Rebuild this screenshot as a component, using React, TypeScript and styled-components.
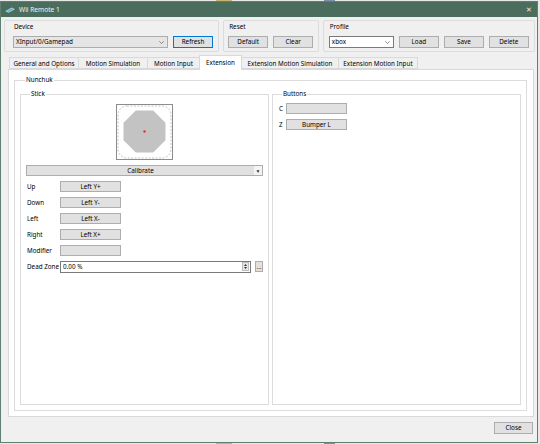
import styled, { createGlobalStyle } from "styled-components";

const GlobalStyle = createGlobalStyle`
  html, body {
    margin: 0;
    padding: 0;
  }
  body {
    width: 540px;
    height: 444px;
    overflow: hidden;
    background: #5b7a6d;
    font-family: "Noto Sans", "Liberation Sans", sans-serif;
    font-size: 6.3px;
    color: #000;
  }
  * {
    box-sizing: border-box;
  }
`;

const Desktop = styled.div`
  padding-top: 1px;
  background: linear-gradient(90deg, #e8e8e8 0 40%, #c9b36a 40% 43%, #e8e8e8 43% 60%, #7d8fa8 60% 62%, #e8e8e8 62%);
  height: 444px;
`;

const Window = styled.div`
  width: 538px;
  height: 442px;
  border: 1px solid #5f7f71;
  background: #f0f0f0;
  display: flex;
  flex-direction: column;
`;

const TitleBar = styled.div`
  height: 15px;
  background: #4b6d5e;
  color: #f2f5f3;
  display: flex;
  align-items: center;
  padding: 0 4px 0 4px;
  gap: 4px;
  font-size: 6.6px;
`;

const TitleText = styled.span`
  flex: 1;
`;

const CloseGlyph = styled.span`
  font-size: 7px;
  color: #e8eeea;
  margin-right: 1px;
`;

const TopRow = styled.div`
  display: flex;
  gap: 4px;
  margin-top: 3px;
  padding: 0 2px 0 3px;
`;

const Group = styled.div<{ $w: number; $pad: number }>`
  width: ${(p) => p.$w}px;
  height: 32px;
  border: 1px solid #dcdcdc;
  border-radius: 2px;
  padding: 1px 0 0 ${(p) => p.$pad}px;
`;

const GroupTitle = styled.div`
  line-height: 9px;
  padding-left: 1px;
`;

const Controls = styled.div`
  display: flex;
  gap: 5px;
  margin-top: 5px;
`;

const Button = styled.div<{ $w: number; $focus?: boolean }>`
  width: ${(p) => p.$w}px;
  height: 12px;
  flex: none;
  border: 1px solid ${(p) => (p.$focus ? "#0078d7" : "#adadad")};
  background: #e1e1e1;
  display: flex;
  align-items: center;
  justify-content: center;
  line-height: 10px;
`;

const Combo = styled.div<{ $w: number; $editable?: boolean }>`
  width: ${(p) => p.$w}px;
  height: 12px;
  flex: none;
  border: 1px solid ${(p) => (p.$editable ? "#7a7a7a" : "#acacac")};
  background: ${(p) => (p.$editable ? "#fff" : "#e5e5e5")};
  display: flex;
  align-items: center;
  padding: 0 3px 0 2px;
  line-height: 10px;
`;

const ComboText = styled.span`
  flex: 1;
`;

const Chevron = () => (
  <svg width="5" height="3" viewBox="0 0 5 3">
    <path d="M0.3 0.3 L2.5 2.5 L4.7 0.3" fill="none" stroke="#606060" strokeWidth="0.7" />
  </svg>
);

const TabBar = styled.div`
  display: flex;
  align-items: flex-end;
  height: 14px;
  margin: 3px 0 0 9px;
`;

const Tab = styled.div<{ $w: number; $active?: boolean }>`
  width: ${(p) => p.$w}px;
  height: ${(p) => (p.$active ? 15 : 12)}px;
  margin-left: -1px;
  margin-bottom: ${(p) => (p.$active ? -1 : 0)}px;
  border: 1px solid #d9d9d9;
  border-bottom: ${(p) => (p.$active ? "none" : "1px solid #d9d9d9")};
  background: ${(p) => (p.$active ? "#fff" : "#f0f0f0")};
  position: relative;
  z-index: ${(p) => (p.$active ? 1 : 0)};
  display: flex;
  align-items: center;
  justify-content: center;
  padding-bottom: ${(p) => (p.$active ? 2 : 0)}px;
  white-space: nowrap;
`;

const TabPage = styled.div`
  flex: 1;
  margin: 0 3px 0 7px;
  border: 1px solid #d9d9d9;
  background: #fff;
  padding: 6px 6px 5px 5px;
  display: flex;
`;

const GroupBox = styled.fieldset`
  margin: 0;
  min-width: 0;
  flex: 1;
  border: 1px solid #dcdcdc;
  padding: 0 5px 5px 5px;
  display: flex;
  flex-direction: column;
`;

const Legend = styled.legend<{ $indent: number }>`
  margin-left: ${(p) => p.$indent}px;
  padding: 0 1px;
  line-height: 8px;
`;

const Columns = styled.div`
  flex: 1;
  display: flex;
  gap: 3px;
  margin-top: 6px;
`;

const StickBox = styled.div`
  align-self: center;
  margin-top: 6px;
  width: 57px;
  height: 56px;
`;

const Calibrate = styled.div`
  margin-top: 5px;
  height: 11px;
  border: 1px solid #adadad;
  background: #e1e1e1;
  display: flex;
  align-items: center;
`;

const CalibrateText = styled.span`
  flex: 1;
  text-align: center;
`;

const DropArrow = styled.span`
  width: 8px;
  height: 9px;
  background: #f4f4f4;
  display: flex;
  align-items: center;
  justify-content: center;
  font-size: 5px;
  color: #333;
`;

const Mappings = styled.div<{ $top: number }>`
  display: flex;
  flex-direction: column;
  gap: 5px;
  margin-top: ${(p) => p.$top}px;
`;

const Row = styled.div`
  display: flex;
  align-items: center;
  height: 11px;
`;

const Label = styled.span<{ $w: number }>`
  width: ${(p) => p.$w}px;
  flex: none;
  padding-left: 1px;
`;

const MapButton = styled.div`
  width: 61px;
  height: 11px;
  border: 1px solid #adadad;
  background: #e1e1e1;
  display: flex;
  align-items: center;
  justify-content: center;
  line-height: 9px;
`;

const SpinBox = styled.div`
  width: 191px;
  height: 12px;
  border: 1px solid #7a7a7a;
  display: flex;
  align-items: center;
  padding-left: 2px;
`;

const SpinText = styled.span`
  flex: 1;
`;

const Spinner = styled.span`
  width: 7px;
  height: 9px;
  margin-right: 1px;
  background: #e6e6e6;
  border: 1px solid #bdbdbd;
  display: flex;
  flex-direction: column;
  align-items: center;
  justify-content: space-around;
`;

const MoreButton = styled.div`
  width: 8px;
  height: 11px;
  margin-left: 4px;
  border: 1px solid #adadad;
  background: #e1e1e1;
  display: flex;
  align-items: flex-end;
  justify-content: center;
  line-height: 8px;
  font-size: 6px;
`;

const Footer = styled.div`
  display: flex;
  justify-content: flex-end;
  padding: 5px 4px 8px 0;
`;

const WiimoteIcon = () => (
  <svg width="10" height="6" viewBox="0 0 10 6">
    <path d="M0.8 4.2 L6.5 1 L9.3 2.2 L3.6 5.3 Z" fill="#56b4e0" stroke="#d8eef8" strokeWidth="0.6" />
  </svg>
);

const Stick = () => {
  const cx = 28.5;
  const cy = 27.5;
  const r = 22.7;
  const pts = Array.from({ length: 8 }, (_, i) => {
    const a = ((22.5 + i * 45) * Math.PI) / 180;
    return `${(cx + r * Math.cos(a)).toFixed(2)},${(cy + r * Math.sin(a)).toFixed(2)}`;
  }).join(" ");
  return (
    <svg width="57" height="56" viewBox="0 0 57 56">
      <rect x="0.5" y="0.5" width="56" height="55" fill="#fff" stroke="#8c8c8c" />
      <rect x="2" y="2" width="53" height="52" rx="9" fill="none" stroke="#b5b5b5" strokeWidth="0.8" strokeDasharray="2 1.5" />
      <polygon points={pts} fill="#c3c3c3" />
      <rect x={cx - 1} y={cy - 1} width="2" height="2" fill="#e8141e" />
    </svg>
  );
};

const stickRows = [
  { label: "Up", value: "Left Y+" },
  { label: "Down", value: "Left Y-" },
  { label: "Left", value: "Left X-" },
  { label: "Right", value: "Left X+" },
  { label: "Modifier", value: "" },
];

const buttonRows = [
  { label: "C", value: "" },
  { label: "Z", value: "Bumper L" },
];

const tabs = [
  { name: "General and Options", w: 70 },
  { name: "Motion Simulation", w: 70 },
  { name: "Motion Input", w: 53 },
  { name: "Extension", w: 43, active: true },
  { name: "Extension Motion Simulation", w: 98 },
  { name: "Extension Motion Input", w: 80 },
];

export default function App() {
  return (
    <>
      <GlobalStyle />
      <Desktop>
        <Window>
          <TitleBar>
            <WiimoteIcon />
            <TitleText>Wii Remote 1</TitleText>
            <CloseGlyph>✕</CloseGlyph>
          </TitleBar>

          <TopRow>
            <Group $w={216} $pad={8}>
              <GroupTitle>Device</GroupTitle>
              <Controls>
                <Combo $w={155}>
                  <ComboText>XInput/0/Gamepad</ComboText>
                  <Chevron />
                </Combo>
                <Button $w={40} $focus>
                  Refresh
                </Button>
              </Controls>
            </Group>
            <Group $w={96} $pad={4}>
              <GroupTitle>Reset</GroupTitle>
              <Controls>
                <Button $w={40}>Default</Button>
                <Button $w={40}>Clear</Button>
              </Controls>
            </Group>
            <Group $w={213} $pad={5}>
              <GroupTitle>Profile</GroupTitle>
              <Controls>
                <Combo $w={65} $editable>
                  <ComboText>xbox</ComboText>
                  <Chevron />
                </Combo>
                <Button $w={40}>Load</Button>
                <Button $w={40}>Save</Button>
                <Button $w={40}>Delete</Button>
              </Controls>
            </Group>
          </TopRow>

          <TabBar>
            {tabs.map((t) => (
              <Tab key={t.name} $w={t.w} $active={t.active}>
                {t.name}
              </Tab>
            ))}
          </TabBar>

          <TabPage>
            <GroupBox>
              <Legend $indent={5}>Nunchuk</Legend>
              <Columns>
                <GroupBox>
                  <Legend $indent={4}>Stick</Legend>
                  <StickBox>
                    <Stick />
                  </StickBox>
                  <Calibrate>
                    <CalibrateText>Calibrate</CalibrateText>
                    <DropArrow>▼</DropArrow>
                  </Calibrate>
                  <Mappings $top={5}>
                    {stickRows.map((r) => (
                      <Row key={r.label}>
                        <Label $w={34}>{r.label}</Label>
                        <MapButton>{r.value}</MapButton>
                      </Row>
                    ))}
                    <Row>
                      <Label $w={34}>Dead Zone</Label>
                      <SpinBox>
                        <SpinText>0.00 %</SpinText>
                        <Spinner>
                          <svg width="3" height="2" viewBox="0 0 3 2">
                            <path d="M0 2 L1.5 0 L3 2 Z" fill="#333" />
                          </svg>
                          <svg width="3" height="2" viewBox="0 0 3 2">
                            <path d="M0 0 L1.5 2 L3 0 Z" fill="#333" />
                          </svg>
                        </Spinner>
                      </SpinBox>
                      <MoreButton>...</MoreButton>
                    </Row>
                  </Mappings>
                </GroupBox>
                <GroupBox>
                  <Legend $indent={4}>Buttons</Legend>
                  <Mappings $top={5}>
                    {buttonRows.map((r) => (
                      <Row key={r.label}>
                        <Label $w={8}>{r.label}</Label>
                        <MapButton>{r.value}</MapButton>
                      </Row>
                    ))}
                  </Mappings>
                </GroupBox>
              </Columns>
            </GroupBox>
          </TabPage>

          <Footer>
            <Button $w={39}>Close</Button>
          </Footer>
        </Window>
      </Desktop>
    </>
  );
}
